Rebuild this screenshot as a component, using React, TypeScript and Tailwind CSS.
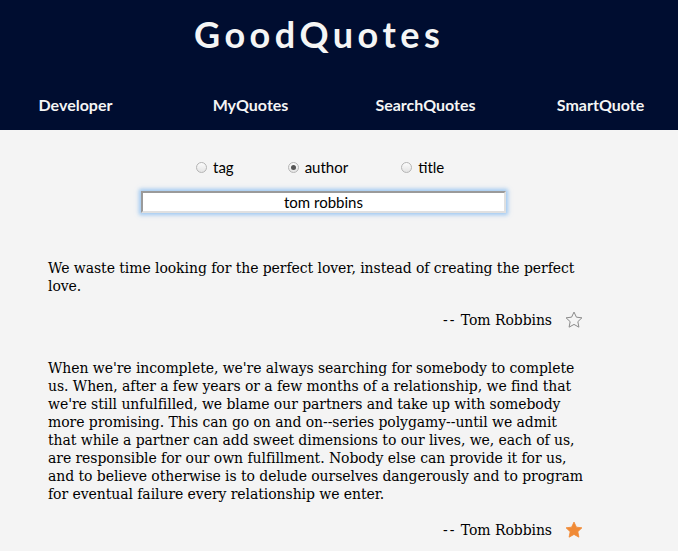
import React from 'react';

const quotes = [
  {
    lines: ['We waste time looking for the perfect lover, instead of creating the perfect', 'love.'],
    author: 'Tom Robbins',
    fav: false,
  },
  {
    lines: [
      "When we're incomplete, we're always searching for somebody to complete",
      'us. When, after a few years or a few months of a relationship, we find that',
      "we're still unfulfilled, we blame our partners and take up with somebody",
      'more promising. This can go on and on--series polygamy--until we admit',
      'that while a partner can add sweet dimensions to our lives, we, each of us,',
      'are responsible for our own fulfillment. Nobody else can provide it for us,',
      'and to believe otherwise is to delude ourselves dangerously and to program',
      'for eventual failure every relationship we enter.',
    ],
    author: 'Tom Robbins',
    fav: true,
  },
];

function Star({ filled }: { filled: boolean }) {
  return (
    <svg width="20" height="20" viewBox="0 0 24 24">
      <path
        d="M12 2.5l2.9 6.1 6.6.8-4.9 4.6 1.3 6.6L12 17.3l-5.9 3.3 1.3-6.6-4.9-4.6 6.6-.8z"
        fill={filled ? '#f08a36' : 'none'}
        stroke={filled ? '#f08a36' : '#8a8a8a'}
        strokeWidth={filled ? 1 : 1.2}
        strokeLinejoin="round"
      />
    </svg>
  );
}

function Radio({ label, checked }: { label: string; checked?: boolean }) {
  return (
    <label className="flex items-center gap-[6px]">
      <span className="w-[11px] h-[11px] rounded-full border border-[#b5b5b5] bg-gradient-to-b from-[#fbfbfb] to-[#e4e4e4] flex items-center justify-center">
        {checked && <span className="w-[5px] h-[5px] rounded-full bg-[#555]" />}
      </span>
      <span className="text-[15px] text-black">{label}</span>
    </label>
  );
}

export default function App() {
  return (
    <div className="min-h-[551px] bg-[#f4f4f4] font-['Lato','Liberation_Sans',sans-serif]">
      <header className="h-[130px] bg-[#000d30] text-[#f5f5f5]">
        <h1 className="pt-[12px] pl-[194px] text-[36px] font-bold tracking-[4.5px] leading-[44px]">GoodQuotes</h1>
        <nav className="mt-[39px] -ml-3 grid grid-cols-[175px_175px_175px_175px] text-[16px] font-bold text-center leading-[20px]">
          <span>Developer</span>
          <span>MyQuotes</span>
          <span>SearchQuotes</span>
          <span>SmartQuote</span>
        </nav>
      </header>

      <div className="flex pl-[196px] pt-[28px] leading-[18px]">
        <Radio label="tag" />
        <div className="ml-[54px]"><Radio label="author" checked /></div>
        <div className="ml-[53px]"><Radio label="title" /></div>
      </div>

      <div className="pl-[141px] pt-[14px]">
        <input
          readOnly
          value="tom robbins"
          className="w-[365px] h-[22px] bg-white border-2 border-t-[#9a9a9a] border-l-[#9a9a9a] border-r-[#e0e0e0] border-b-[#e0e0e0] text-center text-[15px] text-black outline-none shadow-[0_0_4px_2px_rgba(100,170,240,0.6)]"
        />
      </div>

      <div className="pl-[48px] w-[592px] pt-[45px] font-['DejaVu_Serif',serif] text-[14px] tracking-[-0.07px] text-black">
        {quotes.map((q, i) => (
          <div key={i} className={i > 0 ? 'mt-[29px]' : ''}>
            <p className="leading-[18px] whitespace-nowrap">
              {q.lines.map((l, j) => (
                <React.Fragment key={j}>
                  {l}
                  {j < q.lines.length - 1 && <br />}
                </React.Fragment>
              ))}
            </p>
            <div className={`${i > 0 ? 'mt-[17px]' : 'mt-[15px]'} flex items-center justify-end gap-[12px] pr-[8px]`}>
              <span className="leading-[20px]">
                <span className="tracking-[2px]">--</span> {q.author}
              </span>
              <Star filled={q.fav} />
            </div>
          </div>
        ))}
      </div>
    </div>
  );
}
